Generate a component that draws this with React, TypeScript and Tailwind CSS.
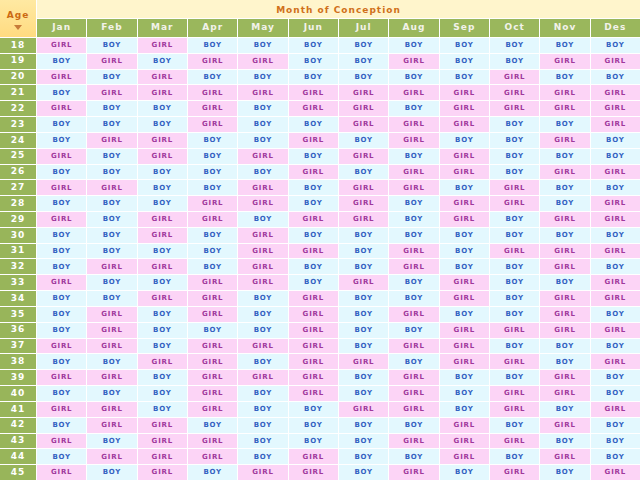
const months = ['Jan', 'Feb', 'Mar', 'Apr', 'May', 'Jun', 'Jul', 'Aug', 'Sep', 'Oct', 'Nov', 'Des'];

// G = girl, B = boy, one string per age from 18 to 45
const chart = [
  'GBGBBBBBBBBB',
  'BGBGGBBGBBGG',
  'GBGBBBBBBGBB',
  'BGGGGGGGGGGG',
  'GBBGBGGBGGGG',
  'BBBGBBGGGBBG',
  'BGGBBGBGBBGB',
  'GBGBGBGBGBBB',
  'BBBBBGBGGBGG',
  'GGBBGBGGBGBB',
  'BBBGGBGBGGBG',
  'GBGGBGGBGBGG',
  'BBGBGBBBBBBB',
  'BBBBGGBGBGGG',
  'BGGBGBBGBBGB',
  'GBBGGBGBGBBG',
  'BBGGBGBBGBGG',
  'BGBGBGBGBBGB',
  'BGBBBGBBGGGG',
  'GGBGGGBGGBBB',
  'BBGGBGGBGGBG',
  'GGBGGGBGBBGB',
  'BBBGBGBGBGGB',
  'GGBGBBGGBGBG',
  'BGGBBBBBGBGB',
  'GBGGBBBGGGBB',
  'BGGGBGBBGBGB',
  'GBGBGGBGBGBG',
];

export default function App() {
  return (
    <div
      className="grid h-[480px] w-[640px] grid-cols-[36px_repeat(12,minmax(0,1fr))] grid-rows-[18px_18px_repeat(28,minmax(0,1fr))] gap-px overflow-hidden bg-white font-bold"
      style={{ fontFamily: '"DejaVu Sans", Verdana, sans-serif' }}
    >
      {/* Age corner */}
      <div className="row-span-2 flex flex-col items-center justify-center gap-[3px] bg-gradient-to-b from-[#ffe9a2] to-[#ffdb80] pt-[2px]">
        <span className="text-[9px] tracking-[1px] text-[#cc6a12]">Age</span>
        <span className="h-0 w-0 border-x-[4px] border-t-[5px] border-x-transparent border-t-[#c77b3a]" />
      </div>

      <div className="col-span-12 flex items-center justify-center bg-[#fff5cc] pt-[3px] text-[9px] tracking-[1px] text-[#d0701a]">
        Month of Conception
      </div>

      {months.map((m) => (
        <div key={m} className="flex items-center justify-center bg-[#9ab75c] text-[9px] tracking-[1px] text-[#f2f2ea]">
          {m}
        </div>
      ))}

      {chart.map((row, i) => (
        <div key={i} className="contents">
          <div className="flex items-center justify-center bg-[#98b55a] text-[9px] tracking-[1px] text-white">
            {18 + i}
          </div>
          {row.split('').map((c, j) =>
            c === 'G' ? (
              <div key={j} className="flex items-center justify-center bg-[#fcd4f6] text-[7px] tracking-[0.8px] text-[#a0389c]">
                GIRL
              </div>
            ) : (
              <div key={j} className="flex items-center justify-center bg-[#e3f8fe] text-[7px] tracking-[0.8px] text-[#3462c2]">
                BOY
              </div>
            )
          )}
        </div>
      ))}
    </div>
  );
}
